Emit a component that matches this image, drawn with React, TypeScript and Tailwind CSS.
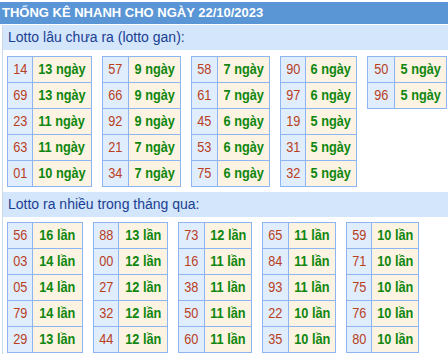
const GAN = [
  { w: ['w-[25px]', 'w-[59px]'], rows: [['14', '13 ngày'], ['69', '13 ngày'], ['23', '11 ngày'], ['63', '11 ngày'], ['01', '10 ngày']] },
  { w: ['w-[26px]', 'w-[52px]'], rows: [['57', '9 ngày'], ['66', '9 ngày'], ['92', '9 ngày'], ['21', '7 ngày'], ['34', '7 ngày']] },
  { w: ['w-[26px]', 'w-[52px]'], rows: [['58', '7 ngày'], ['61', '7 ngày'], ['45', '6 ngày'], ['53', '6 ngày'], ['75', '6 ngày']] },
  { w: ['w-[25px]', 'w-[51px]'], rows: [['90', '6 ngày'], ['97', '6 ngày'], ['19', '5 ngày'], ['31', '5 ngày'], ['32', '5 ngày']] },
  { w: ['w-[27px]', 'w-[52px]'], rows: [['50', '5 ngày'], ['96', '5 ngày']] },
]

const NHIEU = [
  { w: ['w-[25px]', 'w-[50px]'], rows: [['56', '16 lần'], ['03', '14 lần'], ['05', '14 lần'], ['79', '14 lần'], ['29', '13 lần']] },
  { w: ['w-[25px]', 'w-[49px]'], rows: [['88', '13 lần'], ['00', '12 lần'], ['27', '12 lần'], ['32', '12 lần'], ['44', '12 lần']] },
  { w: ['w-[26px]', 'w-[47px]'], rows: [['73', '12 lần'], ['16', '11 lần'], ['38', '11 lần'], ['50', '11 lần'], ['60', '11 lần']] },
  { w: ['w-[26px]', 'w-[47px]'], rows: [['65', '11 lần'], ['84', '11 lần'], ['93', '11 lần'], ['22', '10 lần'], ['35', '10 lần']] },
  { w: ['w-[25px]', 'w-[47px]'], rows: [['59', '10 lần'], ['71', '10 lần'], ['75', '10 lần'], ['76', '10 lần'], ['80', '10 lần']] },
]

type Block = { w: string[]; rows: string[][] }

function StatTable({ block }: { block: Block }) {
  return (
    <div className="self-start border-t border-l border-[#8fb4f2]">
      {block.rows.map(([num, val]) => (
        <div key={num} className="flex">
          <div className={`${block.w[0]} h-[26px] border-r border-b border-[#8fb4f2] bg-[#e0edfd] text-[#b8401c] text-[15px] flex items-center justify-center`}>
            <span className="inline-block whitespace-nowrap scale-x-[0.85]">{num}</span>
          </div>
          <div className={`${block.w[1]} h-[26px] border-r border-b border-[#8fb4f2] bg-[#fdf3e2] text-[#0f870f] text-[15px] font-bold flex items-center justify-center`}>
            <span className="inline-block whitespace-nowrap scale-x-[0.85]">{val}</span>
          </div>
        </div>
      ))}
    </div>
  )
}

function Heading({ children }: { children: string }) {
  return (
    <div className="h-[25px] bg-[#d3e6fb] pl-[5px] text-[14px] leading-[25px] text-[#1a4093]">
      {children}
    </div>
  )
}

export default function App() {
  return (
    <div className="w-[448px] h-[354px] bg-white font-['Liberation_Sans',Arial,sans-serif] overflow-hidden">
      <div className="mt-[2px] h-[22px] bg-[#5a96d6] pl-[2px] text-[13px] font-bold leading-[22px] text-white">
        THỐNG KÊ NHANH CHO NGÀY 22/10/2023
      </div>
      <div className="mt-px ml-[2px] border-l border-[#cbd9ea]">
        <Heading>Lotto lâu chưa ra (lotto gan):</Heading>
        <div className="flex gap-[10px] pl-[4px] pt-[6px] pb-[5px]">
          {GAN.map((b, i) => (
            <StatTable key={i} block={b} />
          ))}
        </div>
        <Heading>Lotto ra nhiều trong tháng qua:</Heading>
        <div className="flex gap-[10px] pl-[4px] pt-[5px] pb-[4px]">
          {NHIEU.map((b, i) => (
            <StatTable key={i} block={b} />
          ))}
        </div>
      </div>
    </div>
  )
}
